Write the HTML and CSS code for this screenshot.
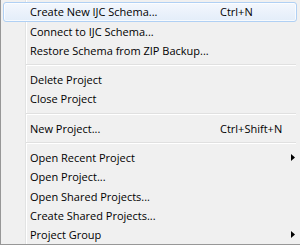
FILE: index.html
```html
<!DOCTYPE html>
<html lang="en">
  <head>
    <meta charset="UTF-8" />
    <meta name="viewport" content="width=device-width, initial-scale=1.0" />
    <title>Project Menu</title>
    <link rel="stylesheet" href="styles.css">
  </head>

  <body>
    <div class="context-menu">
      <div class="menu-item active">
        <span class="label">Create New IJC Schema...</span>
        <span class="shortcut">Ctrl+N</span>
      </div>
      <div class="menu-item">
        <span class="label">Connect to IJC Schema...</span>
      </div>
      <div class="menu-item">
        <span class="label">Restore Schema from ZIP Backup...</span>
      </div>

      <div class="menu-separator"></div>

      <div class="menu-item">
        <span class="label">Delete Project</span>
      </div>
      <div class="menu-item">
        <span class="label">Close Project</span>
      </div>

      <div class="menu-separator"></div>

      <div class="menu-item">
        <span class="label">New Project...</span>
        <span class="shortcut">Ctrl+Shift+N</span>
      </div>

      <div class="menu-separator"></div>

      <div class="menu-item">
        <span class="label">Open Recent Project</span>
        <svg class="submenu-arrow" width="4" height="7" viewBox="0 0 4 7">
          <path d="M0 0L4 3.5L0 7z" />
        </svg>
      </div>
      <div class="menu-item">
        <span class="label">Open Project...</span>
      </div>
      <div class="menu-item">
        <span class="label">Open Shared Projects...</span>
      </div>
      <div class="menu-item">
        <span class="label">Create Shared Projects...</span>
      </div>
      <div class="menu-item">
        <span class="label">Project Group</span>
        <svg class="submenu-arrow" width="4" height="7" viewBox="0 0 4 7">
          <path d="M0 0L4 3.5L0 7z" />
        </svg>
      </div>
    </div>
  </body>
</html>
```

FILE: styles.css
```css
body {
  margin: 0;
  background: #ffffff;
  font-family: "Open Sans", "Noto Sans", sans-serif;
  font-size: 11px;
  color: #000;
}

.context-menu {
  box-sizing: border-box;
  width: 300px;
  height: 245px;
  padding: 2.3px 3px 0 2px;
  border-left: 1px solid #979797;
  border-bottom: 1px solid #979797;
  /* gutter line next to the icon column */
  background:
    linear-gradient(to right,
      transparent 24px,
      #e2e3e3 24px, #e2e3e3 25px,
      #ffffff 25px, #ffffff 26px,
      transparent 26px),
    #f0f0f0;
}

.menu-item {
  box-sizing: border-box;
  height: 19.27px;
  display: grid;
  grid-template-columns: 190px 1fr 14px;
  align-items: center;
  padding-left: 26px;
  border: 1px solid transparent;
  border-radius: 3px;
  white-space: nowrap;
}

.menu-item.active {
  border-color: #b0d0f4;
  background: linear-gradient(to bottom, #f3f7fd, #e3edf9);
  box-shadow: inset 0 0 0 1px rgba(255, 255, 255, 0.7);
}

.label {
  grid-column: 1;
}

.shortcut {
  grid-column: 2;
}

.submenu-arrow {
  grid-column: 3;
  justify-self: end;
  margin-right: 1px;
  fill: #000;
}

.menu-separator {
  height: 10px;
  margin-left: 23px;
  margin-right: 1px;
  background: linear-gradient(to bottom,
    transparent 4px,
    #e0e0e0 4px, #e0e0e0 5px,
    #ffffff 5px, #ffffff 6px,
    transparent 6px);
}
```
